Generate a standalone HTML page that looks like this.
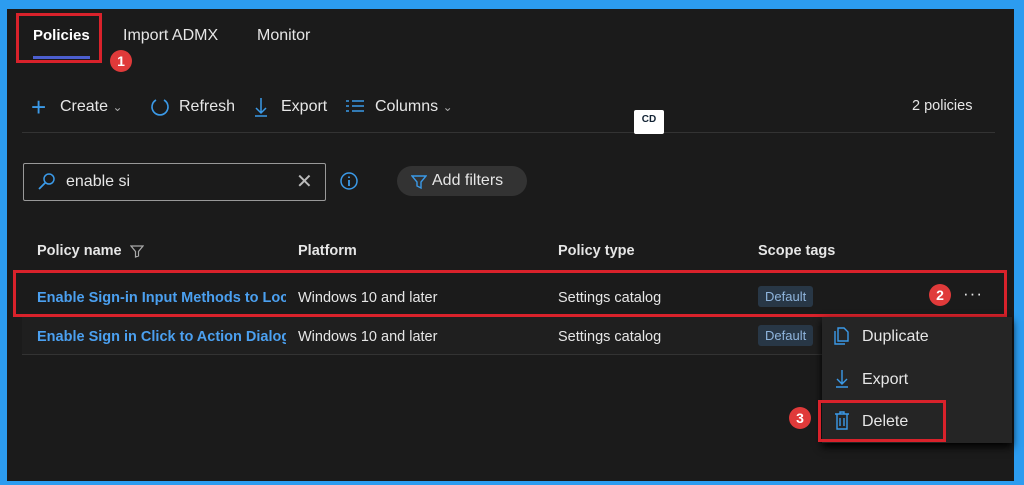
<!DOCTYPE html>
<html><head><style>
*{margin:0;padding:0;box-sizing:border-box}
body{width:1024px;height:485px;background:#2c9cf0;font-family:"Liberation Sans",sans-serif;position:relative;overflow:hidden;color:#e6e6e6}
#m{position:absolute;left:7px;top:9px;width:1007px;height:472px;background:#1b1b1b}
.a{position:absolute;white-space:nowrap}
.red{position:absolute;border:3px solid #d9222b}
.badge{position:absolute;width:22px;height:22px;border-radius:50%;background:#e03a3a;color:#fff;font-weight:bold;font-size:14px;text-align:center;line-height:22px}
.lnk{color:#4ba0f0;font-weight:bold;font-size:14.5px}
.tag{position:absolute;background:#283746;color:#8fb5dd;font-size:13px;padding:3px 7px;border-radius:3px}
.t{font-size:16px}
</style></head><body>
<div id="m"></div>
<div class="a" style="left:33px;top:27px;font-size:15px;font-weight:bold;color:#fff">Policies</div>
<div class="a" style="left:33px;top:56px;width:57px;height:3px;background:#4c5fd0"></div>
<div class="red" style="left:16px;top:13px;width:86px;height:50px"></div>
<div class="badge" style="left:110px;top:50px">1</div>
<div class="a t" style="left:123px;top:27px">Import ADMX</div>
<div class="a t" style="left:257px;top:27px">Monitor</div>

<div class="a" style="left:31px;top:92px;font-size:26px;color:#3b9ae8;font-weight:300">+</div>
<div class="a t" style="left:60px;top:98px">Create <span style="color:#aaa;font-size:12px">&#8964;</span></div>
<svg class="a" style="left:149px;top:96px" width="22" height="22"><path d="M7 4 A8 8 0 1 0 15 4" fill="none" stroke="#3b9ae8" stroke-width="1.6"/></svg>
<div class="a t" style="left:179px;top:98px">Refresh</div>
<svg class="a" style="left:253px;top:96px" width="16" height="22"><path d="M8 2V17M3 12L8 17L13 12M2 20H14" fill="none" stroke="#3b9ae8" stroke-width="1.5"/></svg>
<div class="a t" style="left:281px;top:98px">Export</div>
<svg class="a" style="left:345px;top:98px" width="20" height="16"><path d="M1 3H4M7 3H19M1 8H4M7 8H19M1 13H4M7 13H19" stroke="#3b9ae8" stroke-width="1.5"/></svg>
<div class="a t" style="left:375px;top:98px">Columns <span style="color:#aaa;font-size:12px">&#8964;</span></div>
<div class="a" style="left:912px;top:98px;font-size:14.5px">2 policies</div>
<div class="a" style="left:22px;top:132px;width:973px;height:1px;background:#333"></div>
<div class="a" style="left:634px;top:110px;width:30px;height:24px;background:#fff;border-radius:2px;font-size:10px;color:#123;text-align:center;line-height:20px;font-weight:bold">CD</div>

<div class="a" style="left:23px;top:163px;width:303px;height:38px;border:1px solid #999;border-radius:2px"></div>
<svg class="a" style="left:37px;top:171px" width="20" height="20"><circle cx="12" cy="8" r="5" fill="none" stroke="#3b9ae8" stroke-width="1.5"/><path d="M8 12L2 18" stroke="#3b9ae8" stroke-width="1.8"/></svg>
<div class="a t" style="left:66px;top:173px">enable si</div>
<div class="a" style="left:296px;top:169px;font-size:20px;color:#bbb">✕</div>
<svg class="a" style="left:339px;top:171px" width="20" height="20"><circle cx="10" cy="10" r="8" fill="none" stroke="#3b9ae8" stroke-width="1.5"/><path d="M10 9V15M10 5.5V7" stroke="#3b9ae8" stroke-width="1.8"/></svg>
<div class="a" style="left:397px;top:166px;width:130px;height:30px;border-radius:15px;background:#333"></div>
<svg class="a" style="left:411px;top:174px" width="16" height="16"><path d="M1 2H15L10 8V14L6 12V8Z" fill="none" stroke="#3b9ae8" stroke-width="1.4"/></svg>
<div class="a t" style="left:432px;top:172px">Add filters</div>

<div class="a" style="left:37px;top:243px;font-size:14.5px;font-weight:bold">Policy name</div>
<svg class="a" style="left:130px;top:245px" width="14" height="13"><path d="M1 1H13L8.5 6.5V11L5.5 12V6.5Z" fill="none" stroke="#aaa" stroke-width="1.2"/></svg>
<div class="a" style="left:298px;top:243px;font-size:14.5px;font-weight:bold">Platform</div>
<div class="a" style="left:558px;top:243px;font-size:14.5px;font-weight:bold">Policy type</div>
<div class="a" style="left:758px;top:243px;font-size:14.5px;font-weight:bold">Scope tags</div>

<div class="a lnk" style="left:37px;top:290px;width:249px;overflow:hidden">Enable Sign-in Input Methods to Lock</div>
<div class="a" style="left:298px;top:290px;font-size:14.5px">Windows 10 and later</div>
<div class="a" style="left:558px;top:290px;font-size:14.5px">Settings catalog</div>
<div class="tag" style="left:758px;top:286px">Default</div>
<div class="red" style="left:13px;top:270px;width:994px;height:47px"></div>
<div class="badge" style="left:929px;top:284px">2</div>
<div class="a" style="left:963px;top:284px;font-size:17px;letter-spacing:1px">···</div>

<div class="a" style="left:22px;top:317px;width:800px;height:38px;background:#1f1f1f;border-bottom:1px solid #333"></div>
<div class="a lnk" style="left:37px;top:329px;width:249px;overflow:hidden">Enable Sign in Click to Action Dialog</div>
<div class="a" style="left:298px;top:329px;font-size:14.5px">Windows 10 and later</div>
<div class="a" style="left:558px;top:329px;font-size:14.5px">Settings catalog</div>
<div class="tag" style="left:758px;top:325px">Default</div>

<div class="a" style="left:822px;top:317px;width:190px;height:126px;background:#252525;box-shadow:0 4px 8px #000"></div>
<svg class="a" style="left:833px;top:327px" width="18" height="20"><path d="M2 4V17H12M5 1H11L15 5V14H5Z" fill="none" stroke="#3b9ae8" stroke-width="1.4"/></svg>
<div class="a t" style="left:862px;top:328px">Duplicate</div>
<svg class="a" style="left:834px;top:368px" width="16" height="22"><path d="M8 2V16M3 11L8 16L13 11M2 19H14" fill="none" stroke="#3b9ae8" stroke-width="1.4"/></svg>
<div class="a t" style="left:862px;top:371px">Export</div>
<svg class="a" style="left:834px;top:411px" width="16" height="20"><path d="M1 3H15M6 3V1H10V3M3 3V18H13V3M6 7V15M10 7V15" fill="none" stroke="#3b9ae8" stroke-width="1.4"/></svg>
<div class="a t" style="left:862px;top:413px">Delete</div>
<div class="red" style="left:818px;top:400px;width:128px;height:42px"></div>
<div class="badge" style="left:789px;top:407px">3</div>
</body></html>
